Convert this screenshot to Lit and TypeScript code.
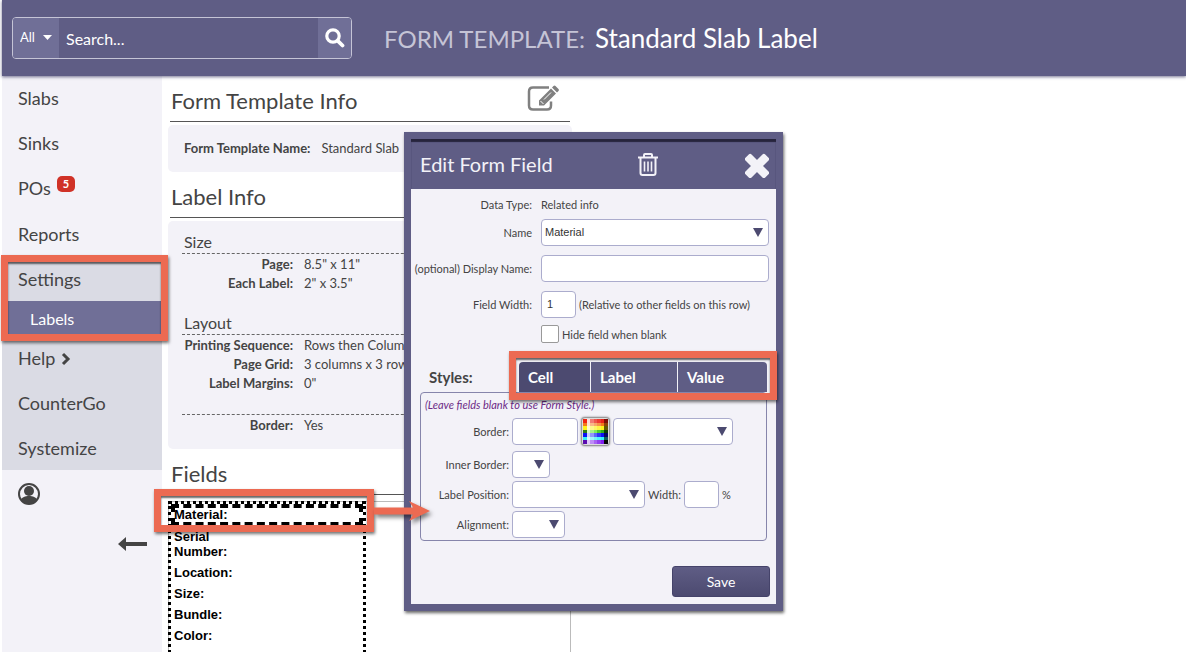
import { LitElement, html, css, svg } from "lit";
import { customElement, state } from "lit/decorators.js";

const PALETTE = [
  ["#f02311", "#fbdcd9", "#f27b74", "#f0554d", "#ee3a30", "#e82418", "#7d0d06"],
  ["#f47a1c", "#fce5d2", "#f9b98a", "#f7a868", "#f5924a", "#f47a1c", "#8a4208"],
  ["#fdf31c", "#fffbd0", "#fef98c", "#fef66a", "#fdf446", "#fdf31c", "#5f5a06"],
  ["#2f7d12", "#d8fbc8", "#a8f48c", "#7ff05a", "#4ccf2c", "#2fae14", "#0b3d04"],
  ["#0a12f5", "#ccd0fd", "#9098fb", "#5c66f9", "#2a36f7", "#0a12f5", "#04075e"],
  ["#35f1fb", "#d2fcfe", "#a0f8fd", "#74f5fc", "#4ef3fb", "#2ff1fb", "#0e5a5e"],
  ["#5a0cb0", "#dfc8fa", "#bd8cf6", "#a662f3", "#9240f0", "#7f1fee", "#050505"],
];

@customElement("nav-menu")
class NavMenu extends LitElement {
  static styles = css`
    :host { display: block; background: #f3f2f8; color: #444; }
    nav { margin-top: -1px; }
    a { display: flex; align-items: center; height: 45px; padding-left: 16px; color: inherit; text-decoration: none; font-size: 18px; }
    .counted { height: 46px; }
    .open { position: relative; }
    .shade { background: #dadbe4; }
    .sub { height: 34px; padding-left: 28px; background: #706f97; color: #fff; font-size: 16px; }
    .badge { margin: -8px 0 0 6px; width: 18px; height: 16px; border-radius: 5px; background: #d03227; color: #fff; font-size: 11px; font-weight: 700; line-height: 16px; text-align: center; }
    .chev { margin: 2px 0 0 6px; }
    .mark { position: absolute; inset: -1px -6px -6px -1px; border: 7px solid #ec6a52; box-shadow: 1px 2px 3px rgba(0,0,0,.55), inset 0 2px 2px rgba(0,0,0,.6); pointer-events: none; z-index: 2; }
    .user { display: block; margin: 12px 0 0 15px; }
    .collapse { display: block; margin: 31px 14px 0 auto; }
    button { padding: 0; border: 0; background: none; color: inherit; line-height: 0; }
  `;
  render() {
    return html`<nav>
      <a href="#slabs">Slabs</a><a href="#sinks">Sinks</a>
      <a class="counted" href="#pos">POs<span class="badge">5</span></a>
      <a href="#reports">Reports</a>
      <div class="shade">
        <div class="open"><a href="#settings">Settings</a><a class="sub" href="#labels">Labels</a><div class="mark"></div></div>
        <a href="#help">Help <svg class="chev" width="10" height="14" viewBox="0 0 10 14"><path d="M2 2l5 5-5 5" fill="none" stroke="#444" stroke-width="3"/></svg></a>
        <a href="#countergo">CounterGo</a><a href="#systemize">Systemize</a>
      </div></nav>
      <button class="user" aria-label="Account"><svg width="24" height="24" viewBox="0 0 24 24"><circle cx="12" cy="12" r="10" fill="none" stroke="#444" stroke-width="2"/><circle cx="12" cy="9" r="5" fill="#444"/><path d="M4 18c1-3 4-4 8-4s7 1 8 4a10 10 0 0 1-16 0z" fill="#444"/></svg></button>
      <button class="collapse" aria-label="Collapse menu"><svg width="30" height="14" viewBox="0 0 30 14"><path d="M0 7l8-7v5h21v4H8v5z" fill="#444"/></svg></button>`;
  }
}

@customElement("field-dialog")
class FieldDialog extends LitElement {
  @state() tab = "Cell";
  static styles = css`
    :host { display: block; box-sizing: border-box; border: 7px solid #5f5d85; background: #f3f2f8; color: #444; font-size: 11px; box-shadow: 1px 2px 3px rgba(0,0,0,.6); }
    header { display: flex; align-items: center; height: 50px; padding: 0 7px 0 9px; background: #5f5d85; color: #f3f2f8; box-shadow: inset 0 3px 1px #26243c; box-sizing: border-box; }
    h2 { flex: 1; margin: 0; font-size: 20px; font-weight: 400; }
    header button { padding: 0; border: 0; background: none; line-height: 0; }
    .trash { margin-right: 87px; }
    .form { display: grid; grid-template-columns: 121px 1fr; column-gap: 9px; padding: 6px 7px 0 0; align-items: center; }
    .form > label, .form > .name { text-align: right; white-space: nowrap; }
    .line { display: flex; align-items: center; gap: 3px; height: 36px; }
    .form .type { height: 19px; padding-bottom: 1px; box-sizing: border-box; }
    .form .name { padding-bottom: 1px; }
    .check { height: 24px; }
    input, select { box-sizing: border-box; height: 27px; margin: 0; border: 1px solid #abaccd; border-radius: 4px; background: #fff; color: #333; font: 11px "Liberation Sans", Arial, sans-serif; padding: 0 5px; }
    select { appearance: none; padding: 0 3px; }
    .pick { position: relative; display: inline-flex; }
    .pick select { width: 100%; }
    .pick svg { position: absolute; right: 6px; top: 9px; pointer-events: none; }
    .pick.wide { flex: 1; }
    .wide-input { flex: 1; }
    .num { width: 35px; }
    .box { appearance: none; width: 18px; height: 18px; border-color: #999; border-radius: 2px; padding: 0; }
    .styles { display: flex; align-items: center; justify-content: space-between; height: 30px; margin: 16px 9px 0 18px; }
    h3 { margin: 0; font-size: 15px; font-weight: 700; }
    .tabs { position: relative; display: flex; width: 248px; height: 30px; }
    .tabs button { flex: 1; border: 0; border-left: 1px solid #f3f2f8; padding: 0 0 0 9px; background: #5f5d85; color: #fff; font: 700 15px Lato, sans-serif; text-align: left; }
    .tabs button:first-child { flex: 0 0 71px; border: 0; border-radius: 4px 0 0 0; }
    .tabs button:nth-child(2) { flex: 0 0 87px; }
    .tabs button:last-of-type { border-radius: 0 4px 0 0; }
    .tabs .on { background: #4c4a70; }
    .mark { position: absolute; inset: -11px -10px -8px -10px; border: 7px solid #ec6a52; box-shadow: 1px 2px 3px rgba(0,0,0,.55), inset 0 2px 2px rgba(0,0,0,.6); pointer-events: none; z-index: 1; }
    fieldset { display: grid; grid-template-columns: 88px 1fr; column-gap: 3px; align-items: center; margin: 0 9px; padding: 3px 0 1px; border: 1px solid #8685ab; border-radius: 4px; min-width: 0; }
    fieldset > label { text-align: right; white-space: nowrap; }
    fieldset .line { height: 30px; }
    fieldset .first { height: 35px; }
    .hint { grid-column: 1 / -1; padding-left: 4px; color: #6c2a86; font-size: 11px; line-height: 18px; font-style: italic; }
    .w66 { width: 66px; } .w120 { width: 120px; } .w38 { width: 38px; } .w133 { width: 133px; } .w53 { width: 53px; }
    .swatch { box-sizing: border-box; padding: 1px; width: 29px; height: 29px; border: 1px solid #999; border-radius: 4px; background: #ddd; box-shadow: 0 0 2px #777; line-height: 0; }
    footer { display: flex; justify-content: flex-end; padding: 25px 6px 7px 0; }
    .save { width: 98px; height: 31px; border: 1px solid #45436a; border-radius: 3px; background: linear-gradient(#5f5d85, #4c4a70); color: #fff; font: 14px Lato, sans-serif; }
  `;
  private pick(id: string, cls: string, value = "") {
    return html`<span class="pick ${cls}"><select id=${id} aria-label=${id}><option>${value}</option></select>
      <svg width="10" height="9" viewBox="0 0 10 9"><path d="M0 0h10L5 9z" fill="#4c4a70"/></svg></span>`;
  }
  render() {
    return html`
      <header><h2>Edit Form Field</h2>
        <button class="trash" aria-label="Delete"><svg width="20" height="23" viewBox="0 0 20 23" fill="none" stroke="#f3f2f8" stroke-width="2"><path d="M0 4.500h20M6 4V2q0-1 1-1h6q1 0 1 1v2M2.500 5v15q0 2 2 2h11q2 0 2-2V5"/><path d="M6.500 8.500v10M10 8.500v10M13.500 8.500v10" stroke-width="1.600"/></svg></button>
        <button aria-label="Close"><svg width="24" height="28" viewBox="0 0 24 28" fill="#f3f2f8"><g transform="translate(12 16) rotate(45)"><rect x="-14" y="-4.300" width="28" height="8.600" rx="2"/><rect x="-4.300" y="-14" width="8.600" height="28" rx="2"/></g></svg></button>
      </header>
      <div class="form">
        <span class="name">Data Type:</span><div class="line type">Related info</div>
        <label for="Name">Name</label><div class="line">${this.pick("Name", "wide", "Material")}</div>
        <label for="display">(optional) Display Name:</label><div class="line"><input id="display" class="wide-input"></div>
        <label for="width">Field Width:</label><div class="line"><input id="width" class="num" value="1"><span>(Relative to other fields on this row)</span></div>
        <span></span><div class="line check"><input id="hide" class="box" type="checkbox"><label for="hide">Hide field when blank</label></div>
      </div>
      <div class="styles"><h3>Styles:</h3>
        <div class="tabs">${["Cell", "Label", "Value"].map((t) => html`<button class=${t === this.tab ? "on" : ""} @click=${() => (this.tab = t)}>${t}</button>`)}<div class="mark"></div></div>
      </div>
      <fieldset>
        <div class="hint">(Leave fields blank to use Form Style.)</div>
        <label for="border">Border:</label><div class="line first"><input id="border" class="w66">
          <button class="swatch" aria-label="Colour"><svg width="25" height="25" viewBox="0 0 7 7" preserveAspectRatio="none" shape-rendering="crispEdges">${PALETTE.map((r, y) => r.map((c, x) => svg`<rect x=${x} y=${y} width="1" height="1" fill=${c}/>`))}</svg></button>
          ${this.pick("Border style", "w120")}</div>
        <label for="Inner border">Inner Border:</label><div class="line">${this.pick("Inner border", "w38")}</div>
        <label for="Label position">Label Position:</label><div class="line">${this.pick("Label position", "w133")}<label for="pct">Width:</label><input id="pct" class="num">%</div>
        <label for="Alignment">Alignment:</label><div class="line">${this.pick("Alignment", "w53")}</div>
      </fieldset>
      <footer><button class="save">Save</button></footer>`;
  }
}

@customElement("app-root")
class AppRoot extends LitElement {
  static styles = css`
    :host { display: flex; flex-direction: column; height: 100vh; overflow: hidden; position: relative; padding-left: 2px; box-sizing: border-box; background: #fff; color: #444; font-family: Lato, sans-serif; }
    .top { flex: none; display: flex; align-items: center; height: 76px; padding-left: 10px; background: #5f5d85; box-shadow: 0 1px 3px rgba(60,58,100,.7); position: relative; z-index: 1; }
    .search { display: flex; box-sizing: border-box; width: 340px; height: 42px; border: 1px solid #c5c4d6; border-radius: 4px; overflow: hidden; }
    .all { position: relative; display: flex; width: 46px; background: #706f97; }
    .all select { appearance: none; width: 100%; border: 0; padding: 0 0 2px 7px; background: none; color: #fff; font: 13px Lato, sans-serif; }
    .all svg { position: absolute; right: 7px; top: 17px; pointer-events: none; }
    .search input { flex: 1; min-width: 0; border: 0; padding: 0 7px; background: none; color: #fff; font: 16px Lato, sans-serif; }
    .search input::placeholder { color: #fff; opacity: 1; }
    .go { width: 33px; padding: 0; border: 0; background: #706f97; line-height: 0; }
    h1 { margin: 0 0 0 32px; color: #fff; font-size: 26px; font-weight: 400; }
    h1 span { margin-right: 10px; color: #c5c4d6; font-size: 24px; }
    .page { flex: 1; min-height: 0; display: grid; grid-template-columns: 160px 1fr; }
    main { width: 404px; padding-left: 6px; }
    .head { display: flex; align-items: center; justify-content: space-between; margin: 0 2px 0 2px; height: 46px; box-sizing: border-box; padding: 3px 11px 0 1px; border-bottom: 1px solid #555; }
    h2 { margin: 0; font-size: 22px; font-weight: 400; }
    .edit { padding: 0; border: 0; background: none; line-height: 0; }
    .panel { margin: 3px 0 0; padding: 12px 14px 14px; border-radius: 5px; background: #f3f2f8; font-size: 13px; }
    .row { display: grid; grid-template-columns: 111px 1fr; column-gap: 11px; line-height: 19px; }
    .row dt { font-weight: 700; text-align: right; white-space: nowrap; }
    .row dd { margin: 0; white-space: nowrap; }
    .tpl { padding: 14px 16px; }
    .tpl .row { grid-template-columns: auto 1fr; }
    dl { margin: 0; }
    h3 { margin: 0; padding: 0 0 3px 2px; font-size: 16px; line-height: 17px; font-weight: 400; }
    .group { margin: 0 0 21px; }
    .group dl { border-top: 1px dashed #666; padding-top: 1px; }
    .last { margin: 0; }
    .sheet { margin: 6px 0 0; width: 403px; height: 240px; border: 1px solid #bbb; box-sizing: border-box; color: #000; font: 700 13px "Liberation Sans", Arial, sans-serif; }
    .label { position: relative; width: 192px; height: 260px; margin: -1px; border: 3px dotted #000; }
    .label p { margin: 0 0 6px; padding-left: 3px; line-height: 15px; width: 80px; }
    .label .sel { box-sizing: border-box; width: 192px; height: 22px; outline: 4px dashed #000; outline-offset: -4px; line-height: 21px; margin-bottom: 3px; }
    .mark { position: absolute; left: -17px; top: -15px; width: 206px; height: 29px; border: 7px solid #ec6a52; box-shadow: 1px 2px 3px rgba(0,0,0,.55), inset 0 2px 2px rgba(0,0,0,.6); z-index: 3; }
    .arrow { position: absolute; left: 203px; top: -4px; z-index: 4; filter: drop-shadow(2px 3px 2px rgba(0,0,0,.5)); }
    field-dialog { position: absolute; left: 404px; top: 132px; width: 379px; z-index: 2; }
  `;
  render() {
    const rows = (list: string[][]) => html`<dl>${list.map(([k, v]) => html`<div class="row"><dt>${k}</dt><dd>${v}</dd></div>`)}</dl>`;
    return html`
      <div class="top">
        <div class="search">
          <div class="all"><select aria-label="Search in"><option>All</option></select><svg width="9" height="5" viewBox="0 0 9 5"><path d="M0 0h9L4.500 5z" fill="#fff"/></svg></div>
          <input aria-label="Search" placeholder="Search...">
          <button class="go" aria-label="Go"><svg width="20" height="20" viewBox="0 0 20 20" fill="none" stroke="#fff"><circle cx="8" cy="8" r="6.200" stroke-width="3.200"/><path d="M12.800 12.800l4.700 4.700" stroke-width="3.800" stroke-linecap="round"/></svg></button>
        </div>
        <h1><span>FORM TEMPLATE:</span>Standard Slab Label</h1>
      </div>
      <div class="page">
        <nav-menu></nav-menu>
        <main>
          <div class="head"><h2>Form Template Info</h2><button class="edit" aria-label="Edit"><svg width="32" height="30" viewBox="0 0 32 30"><path d="M22 2.500H6Q2 2.500 2 6.500v14q0 4 4 4h14q4 0 4-4v-4" fill="none" stroke="#808080" stroke-width="2.500"/><path d="M12 20.500v-5L24 3.500l5 5-12 12zM25 2.500l1.500-1.500q1-.8 2 0l3 3q.8 1 0 2L30 7.500z" fill="#808080"/><path d="M13.500 16l3 3M17 14.500l7-7" stroke="#fff" stroke-width="1"/></svg></button></div>
          <div class="panel tpl">${rows([["Form Template Name:", "Standard Slab"]])}</div>
          <div class="head"><h2>Label Info</h2></div>
          <div class="panel">
            <div class="group"><h3>Size</h3>${rows([["Page:", '8.5" x 11"'], ["Each Label:", '2" x 3.5"']])}</div>
            <div class="group"><h3>Layout</h3>${rows([["Printing Sequence:", "Rows then Columns"], ["Page Grid:", "3 columns x 3 rows"], ["Label Margins:", '0"']])}</div>
            <div class="group last">${rows([["Border:", "Yes"]])}</div>
          </div>
          <div class="head"><h2>Fields</h2></div>
          <div class="sheet"><div class="label">
            <p class="sel">Material:</p>
            ${["Serial Number:", "Location:", "Size:", "Bundle:", "Color:"].map((t) => html`<p>${t}</p>`)}
            <div class="mark"></div>
            <svg class="arrow" width="58" height="24" viewBox="0 0 58 24"><path d="M0 7.500h39L35 1l21 10-21 10 4-6.500H0z" fill="#ec6a52"/></svg>
          </div></div>
        </main>
      </div>
      <field-dialog role="dialog" aria-label="Edit Form Field"></field-dialog>`;
  }
}
